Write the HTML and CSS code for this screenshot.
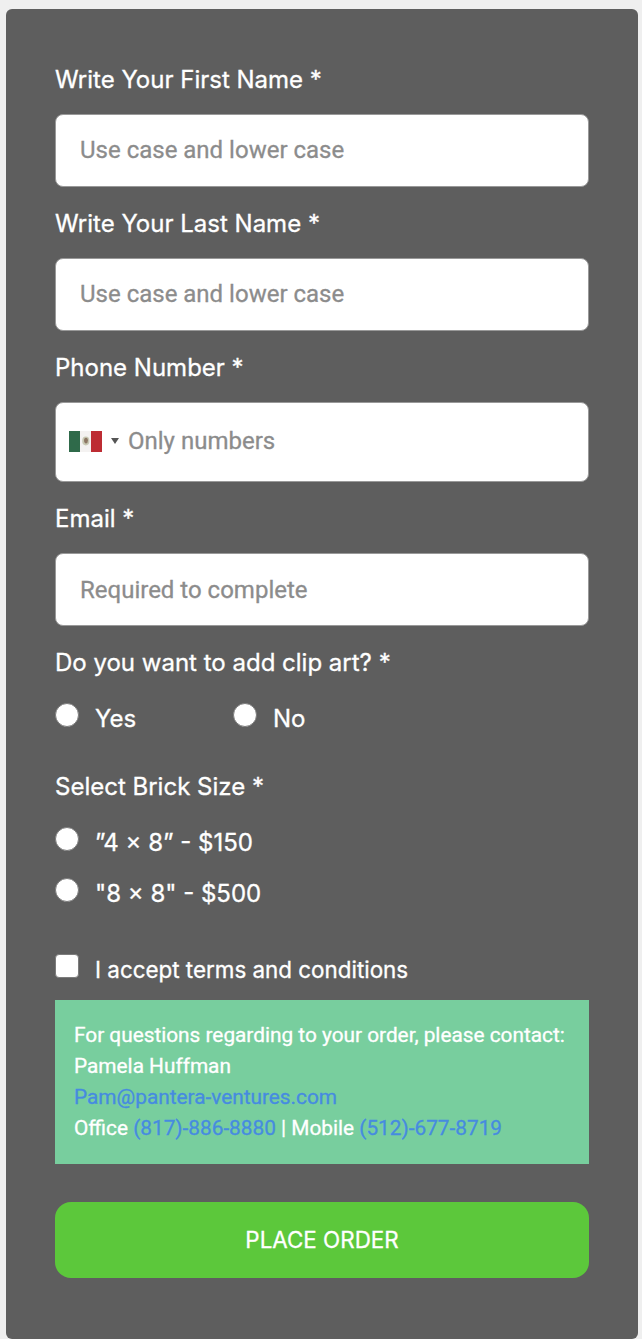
FILE: index.html
```
<!DOCTYPE html>
<html lang="en">
<head>
    <meta charset="UTF-8">
    <meta name="viewport" content="width=device-width, initial-scale=1.0">
    <title>Place Order</title>
    <link rel="stylesheet" href="styles.css">
</head>
<body>
    <form class="order-form">
        <div class="field">
            <label class="label" for="first-name">Write Your First Name *</label>
            <input type="text" class="input input-name" id="first-name" placeholder="Use case and lower case">
        </div>
        <div class="field">
            <label class="label" for="last-name">Write Your Last Name *</label>
            <input type="text" class="input input-name" id="last-name" placeholder="Use case and lower case">
        </div>
        <div class="field">
            <label class="label" for="phone">Phone Number *</label>
            <div class="phone">
                <svg class="flag" viewBox="0 0 33 21">
                    <rect width="33" height="21" fill="#f4f2f1"/>
                    <rect width="11" height="21" fill="#2f6a4a"/>
                    <rect x="22" width="11" height="21" fill="#bd2c33"/>
                    <ellipse cx="16.8" cy="10" rx="3.6" ry="4.4" fill="#c9c9b4"/>
                    <ellipse cx="17" cy="9.6" rx="1.9" ry="2.8" fill="#8d7763"/>
                </svg>
                <span class="arrow"></span>
                <input type="tel" class="phone-input" id="phone" placeholder="Only numbers">
            </div>
        </div>
        <div class="field">
            <label class="label" for="email">Email *</label>
            <input type="email" class="input" id="email" placeholder="Required to complete">
        </div>
        <div class="field clip-art">
            <div class="label">Do you want to add clip art? *</div>
            <div class="options options-inline">
                <label class="option"><input type="radio" class="radio" name="clip"><span>Yes</span></label>
                <label class="option"><input type="radio" class="radio" name="clip"><span>No</span></label>
            </div>
        </div>
        <div class="field brick-size">
            <div class="label">Select Brick Size *</div>
            <div class="options">
                <label class="option"><input type="radio" class="radio" name="size"><span>”4 × 8” - $150</span></label>
                <label class="option"><input type="radio" class="radio" name="size"><span>"8 × 8" - $500</span></label>
            </div>
        </div>
        <label class="option terms"><input type="checkbox" class="checkbox"><span>I accept terms and conditions</span></label>
        <div class="contact">
            For questions regarding to your order, please contact:<br>
            Pamela Huffman<br>
            <a href="mailto:Pam@pantera-ventures.com">Pam@pantera-ventures.com</a><br>
            Office <a href="tel:8178868880">(817)-886-8880</a> | Mobile <a href="tel:5126778719">(512)-677-8719</a>
        </div>
        <button type="button" class="submit">PLACE ORDER</button>
    </form>
</body>
</html>
```

FILE: styles.css
```
* {
    box-sizing: border-box;
}
html {
    background-color: #fff;
}
body {
    margin: 0;
    padding: 9px 4px 0 6px;
    background-color: #efefef;
    font-family: Inter, sans-serif;
    color: #fff;
    -webkit-text-stroke: 0.3px;
}
.order-form {
    height: 1330px;
    padding: 53px 49px 0;
    border-radius: 6px;
    background-color: #5e5e5e;
}
.field {
    margin-bottom: 19px;
}
.label {
    display: block;
    margin-bottom: 16px;
    font-size: 24px;
    line-height: 36px;
}
.input,
.phone {
    display: block;
    width: 100%;
    height: 73px;
    padding: 0 24px;
    border: 1px solid #999;
    border-radius: 8px;
    background-color: #fff;
    font-family: Roboto, sans-serif;
    font-size: 24px;
}
.input-name {
    padding-bottom: 2px;
}
.input::placeholder,
.phone-input::placeholder {
    color: #8c8c8c;
    -webkit-text-stroke: 0.3px;
}
.phone {
    display: flex;
    align-items: center;
    height: 80px;
    padding: 0 12px 2px 13px;
}
.flag {
    width: 33px;
    height: 21px;
}
.arrow {
    margin: 0 9px;
    border-left: 4px solid transparent;
    border-right: 4px solid transparent;
    border-top: 6px solid #555;
}
.phone-input {
    flex: 1;
    min-width: 0;
    padding: 0;
    border: none;
    font-family: Roboto, sans-serif;
    font-size: 24px;
}
.clip-art {
    margin-bottom: 32px;
}
.brick-size {
    margin-bottom: 40px;
}
.options {
    display: flex;
    flex-direction: column;
    gap: 15px;
    padding-top: 4px;
}
.options-inline {
    display: grid;
    grid-template-columns: repeat(3, 1fr);
    gap: 0;
}
.option {
    display: flex;
    font-size: 24px;
    line-height: 36px;
}
.radio,
.checkbox {
    appearance: none;
    width: 24px;
    height: 24px;
    margin: 2px 16px 0 0;
    border: 1px solid #7c7c7c;
    border-radius: 50%;
    background-color: #fff;
}
.checkbox {
    border-radius: 4px;
}
.terms {
    margin-bottom: 12px;
    font-size: 22.4px;
}
.contact {
    height: 164px;
    padding: 20px 19px;
    background-color: #78ce9e;
    font-family: Roboto, sans-serif;
    font-size: 20.8px;
    line-height: 31px;
    white-space: nowrap;
}
.contact a {
    color: #468be0;
    text-decoration: none;
}
.submit {
    width: 100%;
    height: 76px;
    margin-top: 38px;
    padding-bottom: 3px;
    border: none;
    border-radius: 16px;
    background-color: #5cc83b;
    color: #fff;
    font-family: Inter, sans-serif;
    font-size: 22.4px;
    -webkit-text-stroke: 0.3px;
}
```
